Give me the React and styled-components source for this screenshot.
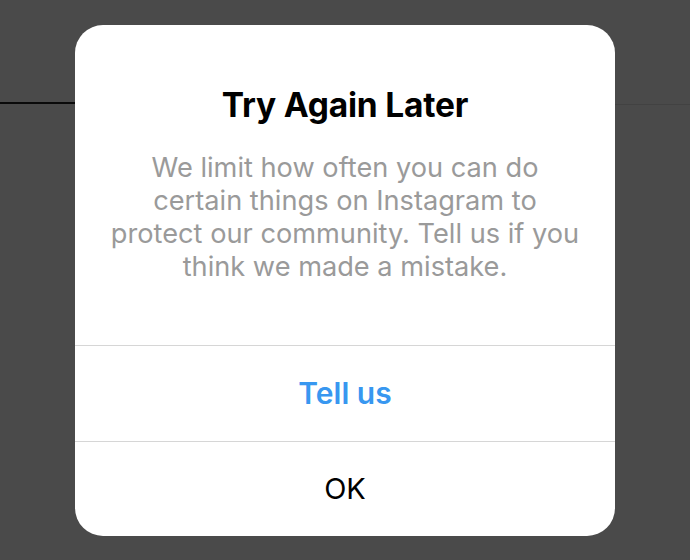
import React from "react";
import styled, { createGlobalStyle } from "styled-components";

const GlobalStyles = createGlobalStyle`
  html, body {
    margin: 0;
    padding: 0;
    background: #4a4a4a;
    font-family: Inter, "Noto Sans", "Liberation Sans", sans-serif;
  }
`;

const Page = styled.div`
  position: relative;
  width: 690px;
  height: 560px;
  overflow: hidden;
  background: #4a4a4a;
`;

const Header = styled.div`
  display: flex;
  height: 105px;
  align-items: flex-end;
`;

const HeaderLine = styled.div`
  flex: ${(p) => (p.$grow ? 1 : "0 0 auto")};
  width: ${(p) => (p.$width ? `${p.$width}px` : "auto")};
  height: ${(p) => (p.$active ? 2 : 1)}px;
  margin-bottom: ${(p) => (p.$active ? 1 : 0)}px;
  background: ${(p) => (p.$active ? "#0a0a0a" : "#424242")};
`;

const Overlay = styled.div`
  position: absolute;
  inset: 0;
  display: flex;
  align-items: center;
  justify-content: center;
`;

const Dialog = styled.div`
  width: 540px;
  background: #fff;
  border-radius: 28px;
  overflow: hidden;
  display: flex;
  flex-direction: column;
`;

const Content = styled.div`
  padding: 60px 16px 62px;
  text-align: center;
  white-space: nowrap;
`;

const Title = styled.h1`
  margin: 0 0 26px;
  font-size: 33.5px;
  line-height: 40px;
  font-weight: 700;
  color: #000;
  letter-spacing: -0.2px;
`;

const Message = styled.p`
  margin: 0;
  font-size: 27.2px;
  line-height: 33px;
  font-weight: 400;
  color: #9a9a9a;
`;

const Action = styled.button`
  display: block;
  width: 100%;
  height: ${(p) => p.$height}px;
  border: 0;
  border-top: 1px solid #d6d6d6;
  background: transparent;
  font-family: inherit;
  font-size: ${(p) => (p.$primary ? 30 : 29)}px;
  font-weight: ${(p) => (p.$primary ? 600 : 400)};
  color: ${(p) => (p.$primary ? "#3897f0" : "#000")};
  cursor: pointer;
  padding: 0;
`;

export default function App() {
  return (
    <Page>
      <GlobalStyles />
      <Header>
        <HeaderLine $active $width={75} />
        <HeaderLine $grow />
      </Header>
      <Overlay>
        <Dialog>
          <Content>
            <Title>Try Again Later</Title>
            <Message>
              We limit how often you can do
              <br />
              certain things on Instagram to
              <br />
              protect our community. Tell us if you
              <br />
              think we made a mistake.
            </Message>
          </Content>
          <Action $primary $height={96}>
            Tell us
          </Action>
          <Action $height={95}>OK</Action>
        </Dialog>
      </Overlay>
    </Page>
  );
}
